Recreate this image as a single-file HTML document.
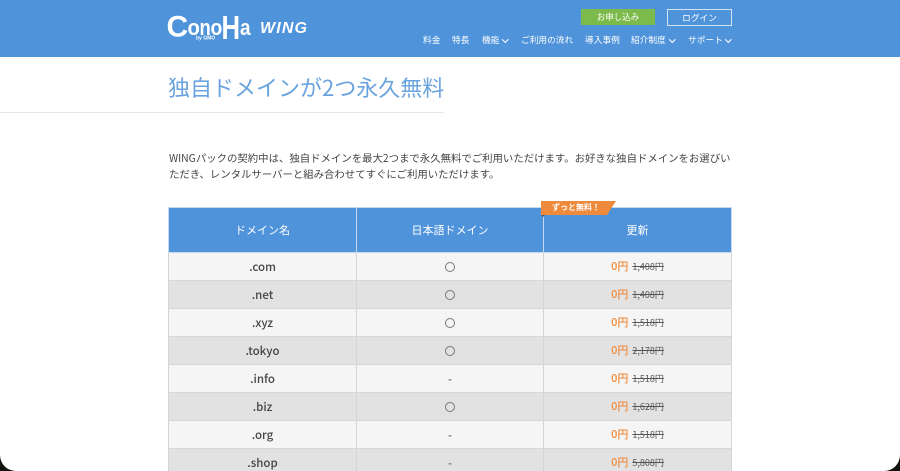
<!DOCTYPE html>
<html lang="ja">
<head>
<meta charset="utf-8">
<title>独自ドメインが2つ永久無料</title>
<style>
*{box-sizing:border-box;margin:0;padding:0}
html,body{width:900px;height:471px;overflow:hidden;background:#fff}
body{font-family:"Noto Sans CJK JP","Liberation Sans",sans-serif;color:#444;position:relative}
.a{position:absolute;white-space:nowrap}
#hd{position:absolute;left:0;top:0;width:900px;height:57px;background:#4f93db}
.nav{top:33px;height:14px;line-height:14px;font-size:8.7px;color:#fff}
.chev{display:block;width:4.500px;height:4.500px;border-right:1px solid #fff;border-bottom:1px solid #fff;transform:rotate(45deg);position:absolute;top:37px}
#h1{left:168px;top:71px;font-size:22px;line-height:32px;color:#6aa3de}
#rule{position:absolute;left:0;top:112px;width:444px;height:1px;background:#e6e6e6}
.p{left:169px;font-size:10.400px;line-height:16px;color:#444}
table{position:absolute;left:168px;top:207px;width:563px;border-collapse:collapse;table-layout:fixed}
th{height:45px;background:#4f93db;color:#fff;font-weight:400;font-size:11px;border:1px solid #c5d8ee;text-align:center}
td{height:28px;border:1px solid #d6d6d6;text-align:center;font-size:11.500px;color:#444;padding:0;line-height:14px}
tr:nth-child(odd) td{background:#f5f5f5}
tr:nth-child(even) td{background:#e2e2e2}
td.d{font-weight:500;color:#444}
.o{display:inline-block;width:10px;height:10px;border:1px solid #777;border-radius:50%;vertical-align:-1px}
.z{color:#ee8a3c;font-weight:500;font-size:11px;margin-right:4px}
.s{font-size:9px;color:#555;text-decoration:line-through}
.corner{position:absolute;width:16px;height:16px;bottom:0}
.lg{font-family:"Liberation Sans",sans-serif;font-weight:700;fill:#fff}
</style>
</head>
<body>
<div id="hd"></div>

<svg class="a" style="left:0;top:0" width="330" height="57" viewBox="0 0 330 57">
<text class="lg" font-size="30" transform="translate(166.500,36.500) scale(1,1)">C</text>
<text class="lg" font-size="22" transform="translate(187.500,35) scale(.92,1)">o</text>
<text class="lg" font-size="22" transform="translate(199.500,35) scale(.84,1)">n</text>
<text class="lg" font-size="22" transform="translate(210.500,35) scale(.88,1)">o</text>
<text class="lg" font-size="33" transform="translate(221.500,39) scale(.78,1)">H</text>
<text class="lg" font-size="22" transform="translate(240,35) scale(.86,1)">a</text>
<text class="lg" font-size="5" x="196" y="39.500">by GMO</text>
<text class="lg" font-size="16" font-style="italic" x="260" y="33" textLength="47" lengthAdjust="spacing">WING</text>
</svg>

<div class="a" style="left:581px;top:9px;width:74px;height:16px;background:#7cbb4b;color:#fff;font-size:8.500px;line-height:16px;text-align:center">お申し込み</div>
<div class="a" style="left:667px;top:9px;width:65px;height:17px;border:1px solid #d5e4f5;color:#fff;font-size:8.700px;line-height:15px;text-align:center">ログイン</div>

<div class="a nav" style="left:423px">料金</div>
<div class="a nav" style="left:452px">特長</div>
<div class="a nav" style="left:482px">機能</div><span class="chev" style="left:503px"></span>
<div class="a nav" style="left:521px">ご利用の流れ</div>
<div class="a nav" style="left:585px">導入事例</div>
<div class="a nav" style="left:631px">紹介制度</div><span class="chev" style="left:670px"></span>
<div class="a nav" style="left:688px">サポート</div><span class="chev" style="left:726px"></span>

<div class="a" id="h1">独自ドメインが2つ永久無料</div>
<div id="rule"></div>

<div class="a p" style="top:150px">WINGパックの契約中は、独自ドメインを最大2つまで永久無料でご利用いただけます。お好きな独自ドメインをお選びい</div>
<div class="a p" style="top:166px">ただき、レンタルサーバーと組み合わせてすぐにご利用いただけます。</div>

<table>
<colgroup><col style="width:188px"><col style="width:187px"><col style="width:188px"></colgroup>
<thead><tr><th>ドメイン名</th><th>日本語ドメイン</th><th>更新</th></tr></thead>
<tbody>
<tr><td class="d">.com</td><td><span class="o"></span></td><td><span class="z">0円</span><span class="s">1,408円</span></td></tr>
<tr><td class="d">.net</td><td><span class="o"></span></td><td><span class="z">0円</span><span class="s">1,408円</span></td></tr>
<tr><td class="d">.xyz</td><td><span class="o"></span></td><td><span class="z">0円</span><span class="s">1,518円</span></td></tr>
<tr><td class="d">.tokyo</td><td><span class="o"></span></td><td><span class="z">0円</span><span class="s">2,178円</span></td></tr>
<tr><td class="d">.info</td><td>-</td><td><span class="z">0円</span><span class="s">1,518円</span></td></tr>
<tr><td class="d">.biz</td><td><span class="o"></span></td><td><span class="z">0円</span><span class="s">1,628円</span></td></tr>
<tr><td class="d">.org</td><td>-</td><td><span class="z">0円</span><span class="s">1,518円</span></td></tr>
<tr><td class="d">.shop</td><td>-</td><td><span class="z">0円</span><span class="s">5,808円</span></td></tr>
</tbody>
</table>

<svg class="a" style="left:540px;top:200px" width="78" height="18" viewBox="0 0 78 18">
<polygon points="1,1 76,1 67,15 1,15" fill="#ee8a3c"/>
<polygon points="1,15 5,15 3,17" fill="#555"/>
</svg>
<div class="a" style="left:541px;top:201px;width:70px;height:14px;line-height:14px;text-align:center;font-size:8px;font-weight:700;color:#fff">ずっと無料！</div>

<svg class="corner" style="left:0" viewBox="0 0 16 16"><path d="M0 0V16H16A16 16 0 0 1 0 0Z" fill="#10130f"/></svg>
<svg class="corner" style="right:0" viewBox="0 0 16 16"><path d="M16 0V16H0A16 16 0 0 0 16 0Z" fill="#10130f"/></svg>
</body>
</html>
